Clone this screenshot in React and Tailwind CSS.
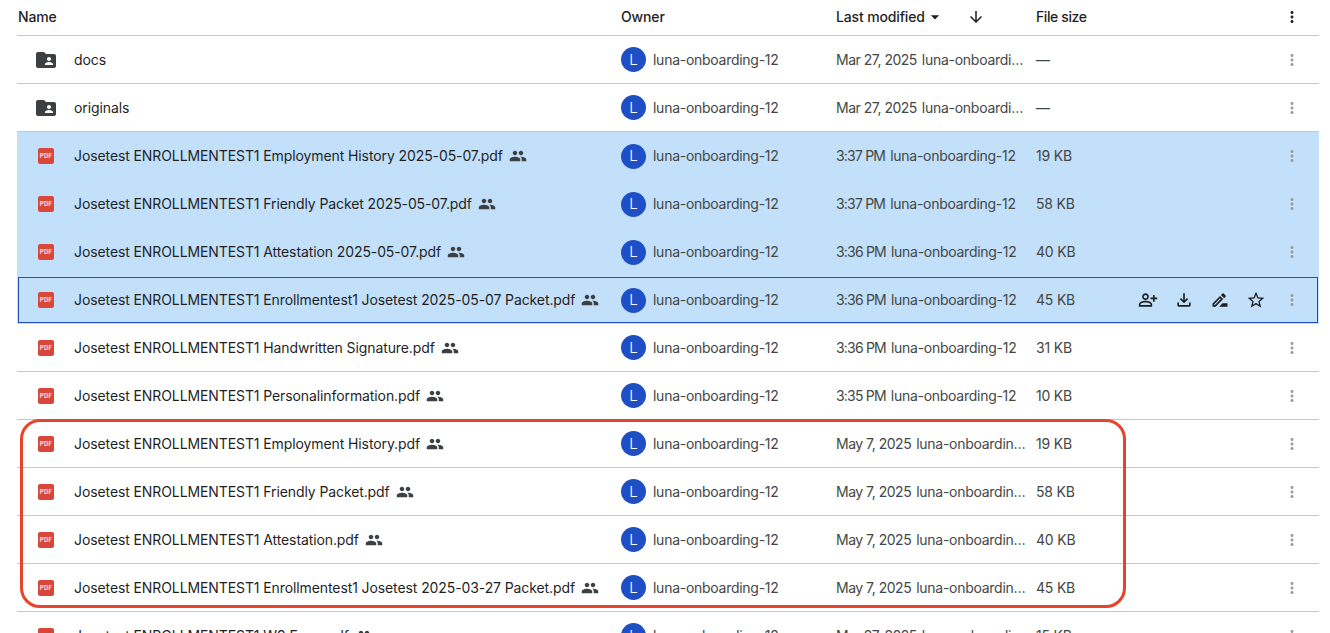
import {
    MdArrowDownward,
    MdArrowDropDown,
    MdMoreVert,
    MdOutlineFileDownload,
    MdOutlinePersonAddAlt,
    MdOutlineStarBorder,
    MdOutlineDriveFileRenameOutline,
    MdPeople,
} from "react-icons/md";

const rows = [
    { type: "folder", name: "docs", date: "Mar 27, 2025", size: "—" },
    { type: "folder", name: "originals", date: "Mar 27, 2025", size: "—" },
    { name: "Josetest ENROLLMENTEST1 Employment History 2025-05-07.pdf", date: "3:37 PM", size: "19 KB", selected: true },
    { name: "Josetest ENROLLMENTEST1 Friendly Packet 2025-05-07.pdf", date: "3:37 PM", size: "58 KB", selected: true },
    { name: "Josetest ENROLLMENTEST1 Attestation 2025-05-07.pdf", date: "3:36 PM", size: "40 KB", selected: true },
    { name: "Josetest ENROLLMENTEST1 Enrollmentest1 Josetest 2025-05-07 Packet.pdf", date: "3:36 PM", size: "45 KB", selected: true, focused: true },
    { name: "Josetest ENROLLMENTEST1 Handwritten Signature.pdf", date: "3:36 PM", size: "31 KB" },
    { name: "Josetest ENROLLMENTEST1 Personalinformation.pdf", date: "3:35 PM", size: "10 KB" },
    { name: "Josetest ENROLLMENTEST1 Employment History.pdf", date: "May 7, 2025", size: "19 KB" },
    { name: "Josetest ENROLLMENTEST1 Friendly Packet.pdf", date: "May 7, 2025", size: "58 KB" },
    { name: "Josetest ENROLLMENTEST1 Attestation.pdf", date: "May 7, 2025", size: "40 KB" },
    { name: "Josetest ENROLLMENTEST1 Enrollmentest1 Josetest 2025-03-27 Packet.pdf", date: "May 7, 2025", size: "45 KB" },
    { name: "Josetest ENROLLMENTEST1 W9 Form.pdf", date: "Mar 27, 2025", size: "15 KB" },
];

const FolderShared = () => (
    <svg viewBox="0 0 24 24" className="h-6 w-6 fill-[#3c4043]">
        <path d="M20 6h-8l-2-2H4c-1.1 0-1.99.9-1.99 2L2 18c0 1.1.9 2 2 2h16c1.1 0 2-.9 2-2V8c0-1.1-.9-2-2-2zm-5 3c1.1 0 2 .9 2 2s-.9 2-2 2-2-.9-2-2 .9-2 2-2zm4 8h-8v-1c0-1.33 2.67-2 4-2s4 .67 4 2v1z" />
    </svg>
);

const PdfIcon = () => (
    <div className="flex h-4 w-4 items-center justify-center rounded-[2px] bg-[#d9473a]">
        <span className="text-[6px] leading-none font-bold tracking-[0.2px] text-white/85">PDF</span>
    </div>
);

const Row = ({ row }) => {
    const bg = row.selected ? "bg-[#c2e0fa]" : "bg-white";
    let border = "border-b border-[#c7c7c7]";
    if (row.selected) border = "";
    if (row.focused) border = "outline outline-[#1f4fc6] outline-offset-[-2px]";
    const dateSpacing = row.date.includes("PM") ? "tracking-[-0.8px]" : "tracking-[-0.5px]";

    return (
        <div className={`flex h-12 shrink-0 items-center text-sm text-[#444746] ${bg} ${border}`}>
            <div className="flex w-[604px] shrink-0 items-center">
                <div className="flex w-[57px] shrink-0 justify-center pl-px">
                    {row.type === "folder" ? <FolderShared /> : <PdfIcon />}
                </div>
                <span className="tracking-[-0.1px] text-[#1f1f1f]">{row.name}</span>
                {row.type !== "folder" && <MdPeople className="ml-[6px] h-[18px] w-[18px] text-[#3c4043]" />}
            </div>
            <div className="flex w-[215px] shrink-0 items-center">
                <div className="flex h-[25px] w-[25px] items-center justify-center rounded-full bg-[#1f4fc6] text-[15px] font-light text-white">L</div>
                <span className="ml-[7px] tracking-[-0.27px]">luna-onboarding-12</span>
            </div>
            <div className="flex w-[190px] shrink-0 items-center">
                <span className={`shrink-0 ${dateSpacing}`}>{row.date}</span>
                <span className="ml-[5px] min-w-0 truncate tracking-[-0.27px]">luna-onboarding-12</span>
            </div>
            <div className="ml-[10px] w-[60px] shrink-0 tracking-[-0.2px]">{row.size}</div>
            <div className="ml-auto flex items-center pr-[9px]">
                {row.focused && (
                    <div className="flex items-center text-[#1f1f1f]">
                        <div className="flex w-9 justify-center"><MdOutlinePersonAddAlt className="h-5 w-5" /></div>
                        <div className="flex w-9 justify-center"><MdOutlineFileDownload className="h-5 w-5" /></div>
                        <div className="flex w-9 justify-center"><MdOutlineDriveFileRenameOutline className="h-5 w-5" /></div>
                        <div className="flex w-9 justify-center"><MdOutlineStarBorder className="h-5 w-5" /></div>
                    </div>
                )}
                <div className="flex w-9 justify-center"><MdMoreVert className="h-[18px] w-[18px] text-[#9a9d9f]" /></div>
            </div>
        </div>
    );
};

export default function App() {
    return (
        <div className="relative h-[633px] w-[1330px] overflow-hidden bg-white pr-[11px] pl-[17px] font-['Inter',sans-serif]">
            {/* Header */}
            <div className="flex h-9 items-center border-b border-[#c7c7c7] pb-[2px] text-sm font-medium tracking-[-0.15px] text-[#1f1f1f]">
                <div className="w-[604px] shrink-0 pl-px">Name</div>
                <div className="w-[215px] shrink-0">Owner</div>
                <div className="flex w-[200px] shrink-0 items-center">
                    <span>Last modified</span>
                    <MdArrowDropDown className="h-5 w-5 text-[#1f1f1f]" />
                    <MdArrowDownward className="ml-[22px] h-[18px] w-[18px] text-[#1f1f1f]" />
                </div>
                <div className="tracking-[-0.4px]">File size</div>
                <div className="mr-[9px] ml-auto flex w-9 justify-center"><MdMoreVert className="h-[18px] w-[18px] text-[#1f1f1f]" /></div>
            </div>

            {/* File rows */}
            <div className="flex flex-col">
                {rows.map((row) => (
                    <Row key={row.name} row={row} />
                ))}
            </div>

            {/* Red highlight drawn over the list */}
            <div className="absolute top-[419px] left-[20px] h-[189px] w-[1106px] rounded-[20px] border-[3px] border-[#e8432b]"></div>
        </div>
    );
}
